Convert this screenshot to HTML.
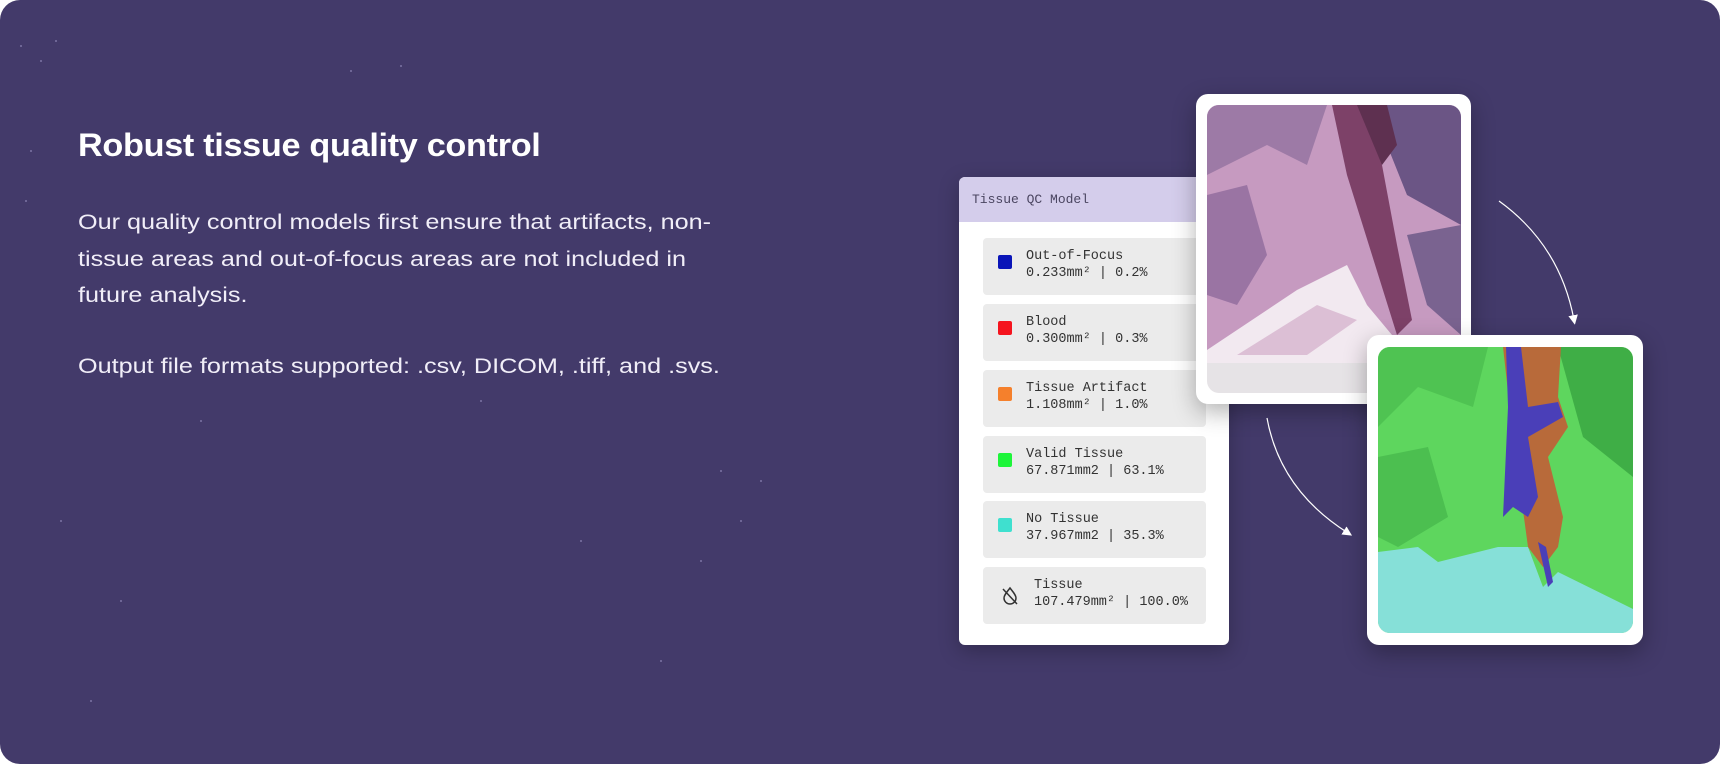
<!DOCTYPE html>
<html><head><meta charset="utf-8"><style>
html,body{margin:0;padding:0;background:#fff;}
body{width:1720px;height:764px;position:relative;overflow:hidden;font-family:"Liberation Sans",sans-serif;}
.bg{position:absolute;left:0;top:0;width:1720px;height:764px;background:#433a6a;border-radius:20px;overflow:hidden;}
.t{position:absolute;left:78px;top:127px;color:#fff;font-size:32px;font-weight:bold;white-space:nowrap;transform:scaleX(1.07);transform-origin:left top;letter-spacing:-0.3px;}
.p{position:absolute;left:78px;color:#f1eef8;font-size:21px;white-space:nowrap;transform:scaleX(1.2);transform-origin:left top;}
.card{position:absolute;left:959px;top:177px;width:270px;height:468px;background:#fff;border-radius:6px;box-shadow:0 6px 20px rgba(0,0,0,.25);overflow:hidden;}
.hd{height:45px;background:#d4cdeb;font-family:"Liberation Mono",monospace;font-size:13px;color:#4a4560;line-height:45px;padding-left:13px;}
.row{position:absolute;left:24px;width:223px;height:57px;background:#ebebeb;border-radius:4px;font-family:"Liberation Mono",monospace;font-size:13.5px;color:#333;}
.row .sq{position:absolute;left:15px;top:17px;width:14px;height:14px;border-radius:2px;}
.row .tx{position:absolute;left:43px;top:10px;line-height:17px;white-space:nowrap;}
.ic{position:absolute;background:#fff;border-radius:12px;box-shadow:0 8px 24px rgba(0,0,0,.3);}
.dot{position:absolute;width:2px;height:2px;background:#7d74a5;border-radius:1px;}
</style></head><body>
<div class="bg">
<div class="dot" style="left:20px;top:45px"></div><div class="dot" style="left:40px;top:60px"></div><div class="dot" style="left:55px;top:40px"></div><div class="dot" style="left:30px;top:150px"></div><div class="dot" style="left:25px;top:200px"></div><div class="dot" style="left:350px;top:70px"></div><div class="dot" style="left:400px;top:65px"></div><div class="dot" style="left:720px;top:470px"></div><div class="dot" style="left:740px;top:520px"></div><div class="dot" style="left:760px;top:480px"></div><div class="dot" style="left:700px;top:560px"></div><div class="dot" style="left:60px;top:520px"></div><div class="dot" style="left:120px;top:600px"></div><div class="dot" style="left:580px;top:540px"></div><div class="dot" style="left:660px;top:660px"></div><div class="dot" style="left:200px;top:420px"></div><div class="dot" style="left:480px;top:400px"></div><div class="dot" style="left:90px;top:700px"></div>
<div class="t">Robust tissue quality control</div>
<div class="p" style="top:211px">Our quality control models first ensure that artifacts, non-</div>
<div class="p" style="top:248px">tissue areas and out-of-focus areas are not included in</div>
<div class="p" style="top:284px">future analysis.</div>
<div class="p" style="top:355px">Output file formats supported: .csv, DICOM, .tiff, and .svs.</div>

<div class="card">
<div class="hd">Tissue QC Model</div>
<div class="row" style="top:61px"><div class="sq" style="background:#0a15b8"></div><div class="tx">Out-of-Focus<br>0.233mm² | 0.2%</div></div>
<div class="row" style="top:127px"><div class="sq" style="background:#f5141e"></div><div class="tx">Blood<br>0.300mm² | 0.3%</div></div>
<div class="row" style="top:193px"><div class="sq" style="background:#f5802c"></div><div class="tx">Tissue Artifact<br>1.108mm² | 1.0%</div></div>
<div class="row" style="top:259px"><div class="sq" style="background:#1ef53a"></div><div class="tx">Valid Tissue<br>67.871mm2 | 63.1%</div></div>
<div class="row" style="top:324px"><div class="sq" style="background:#3fe0cf"></div><div class="tx">No Tissue<br>37.967mm2 | 35.3%</div></div>
<div class="row" style="top:390px"><svg style="position:absolute;left:18px;top:19px" width="18" height="20" viewBox="0 0 18 20"><path d="M9 2 C6 6 3 9 3 12 a6 6 0 0 0 12 0 C15 9 12 6 9 2Z" fill="none" stroke="#333" stroke-width="1.5"/><path d="M2 3 L16 18" stroke="#333" stroke-width="1.5"/></svg><div class="tx" style="left:51px">Tissue<br>107.479mm² | 100.0%</div></div>
</div>

<div class="ic" style="left:1196px;top:94px;width:275px;height:310px;">
<svg style="position:absolute;left:11px;top:11px;border-radius:12px" width="254" height="288" viewBox="0 0 254 288">
<rect width="254" height="288" fill="#e6e3e6"/>
<rect width="254" height="258" fill="#c69ac0"/>
<path d="M0 0H120L100 60L60 40L0 70Z" fill="#9d7aa6"/>
<path d="M170 0H254V120L200 90L180 40Z" fill="#6b5585"/>
<path d="M0 90L40 80L60 150L30 200L0 190Z" fill="#9a74a3"/>
<path d="M200 130L254 120V230L220 200Z" fill="#7a6390"/>
<path d="M125 0H165L175 60L190 140L205 215L190 230L165 150L140 70Z" fill="#7d4168"/>
<path d="M150 0H180L190 40L175 60Z" fill="#5e3050"/>
<path d="M0 245L90 185L140 160L160 200L185 230L254 240V258H0Z" fill="#f2e9f0"/>
<path d="M30 250L110 200L150 215L100 250Z" fill="#dcbfd5"/>
</svg>
</div>

<div class="ic" style="left:1367px;top:335px;width:276px;height:310px;">
<svg style="position:absolute;left:11px;top:12px;border-radius:12px" width="255" height="286" viewBox="0 0 255 286">
<rect width="255" height="286" fill="#5ed65e"/>
<path d="M0 0H110L95 60L40 40L0 80Z" fill="#4fc352"/>
<path d="M180 0H255V130L205 90Z" fill="#3fae46"/>
<path d="M0 110L50 100L70 170L20 200L0 190Z" fill="#4cbf50"/>
<path d="M125 0H183L180 50L190 80L170 110L185 170L180 200L165 220L150 200L135 90Z" fill="#b86a3a"/>
<path d="M128 0H143L150 60L180 55L185 70L150 90L160 150L150 170L135 160L125 170L130 60Z" fill="#4a3fb8"/>
<path d="M0 230L60 215L120 200L150 200L165 240L180 225L255 262V286H0Z" fill="#86e0d8"/>
<path d="M0 205L40 200L60 215L20 235L0 232Z" fill="#86e0d8"/>
<path d="M160 195L170 240L175 235L168 200Z" fill="#4a3fb8"/>
</svg>
</div>

<svg style="position:absolute;left:0;top:0" width="1720" height="764">
<defs><marker id="a" markerWidth="8" markerHeight="8" refX="4" refY="4" orient="auto"><path d="M0 0L8 4L0 8Z" fill="#fff"/></marker></defs>
<path d="M1499 201 Q1560 245 1574 320" stroke="#fff" stroke-width="1.2" fill="none" marker-end="url(#a)"/>
<path d="M1267 418 Q1280 490 1348 533" stroke="#fff" stroke-width="1.2" fill="none" marker-end="url(#a)"/>
</svg>
</div>
</body></html>
